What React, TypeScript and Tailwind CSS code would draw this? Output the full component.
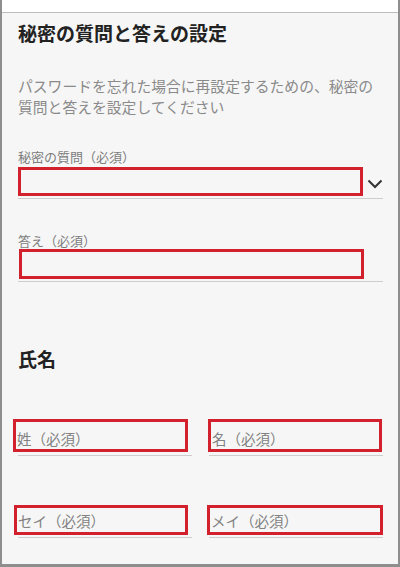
import React from "react";

// 赤枠は入力欄に重ねた注釈
const RedBox = ({ className, children }: { className: string; children?: React.ReactNode }) => (
    <div className={`border-[3px] border-[#d2212d] flex items-center ${className}`}>{children}</div>
);

const NameField = ({ placeholder, box }: { placeholder: string; box: string }) => (
    <div className="border-b border-[#cdcdcd]">
        <RedBox className={box}>
            <span className="text-[14.5px] leading-none text-[#828282] whitespace-nowrap">{placeholder}</span>
        </RedBox>
    </div>
);

export default function App() {
    return (
        <div
            className="w-[400px] h-[567px] flex flex-col bg-[#f6f6f6] border-x-2 border-b-[3px] border-[#8e8e8e] overflow-hidden"
            style={{ fontFamily: '"Noto Sans CJK JP", "Noto Sans", sans-serif' }}
        >
            <div className="h-[13px] shrink-0 bg-white border-b-[1.5px] border-[#bdbdbd]" />

            <div className="pl-4 pr-[15px] flex flex-col">
                <h1 className="mt-[6px] text-[19px] leading-[28px] font-bold text-[#222]">秘密の質問と答えの設定</h1>

                <p className="mt-[28px] text-[14.8px] leading-[21px] text-[#8a8a8a]">
                    パスワードを忘れた場合に再設定するための、秘密の質問と答えを設定してください
                </p>

                {/* 秘密の質問 */}
                <label className="mt-[33px] text-[13px] leading-[14px] text-[#7d7d7d]">秘密の質問（必須）</label>
                <div className="h-[35px] flex items-start border-b border-[#cdcdcd]">
                    <RedBox className="mt-[3px] w-[345px] h-[29px]" />
                    <svg className="ml-auto mt-[15px]" width="16" height="10" viewBox="0 0 16 10" fill="none">
                        <path d="M1.5 1.5 L8 8 L14.5 1.5" stroke="#333" strokeWidth="2" />
                    </svg>
                </div>

                {/* 答え */}
                <label className="mt-[35px] text-[13px] leading-[14px] text-[#7d7d7d]">答え（必須）</label>
                <div className="h-[34px] border-b border-[#cdcdcd]">
                    <RedBox className="mt-[1px] ml-[1px] w-[345px] h-[30px]" />
                </div>

                <h2 className="mt-[63px] text-[19px] leading-[28px] font-bold text-[#222]">氏名</h2>

                <div className="mt-[46px] grid grid-cols-2 gap-x-[17px]">
                    <NameField placeholder="姓（必須）" box="-ml-[5px] w-[175px] h-[33px] pl-px pt-[7px] mb-[3px]" />
                    <NameField placeholder="名（必須）" box="-ml-px w-[174px] h-[33px] pl-px pt-[7px] mb-[3px]" />
                </div>

                <div className="mt-[49px] grid grid-cols-2 gap-x-[17px]">
                    <NameField placeholder="セイ（必須）" box="-ml-[4px] w-[174px] h-[30px] pl-px pt-[3px] mb-[2px]" />
                    <NameField placeholder="メイ（必須）" box="-ml-[2px] w-[176px] h-[30px] pl-px pt-[3px] mb-[2px]" />
                </div>
            </div>
        </div>
    );
}
